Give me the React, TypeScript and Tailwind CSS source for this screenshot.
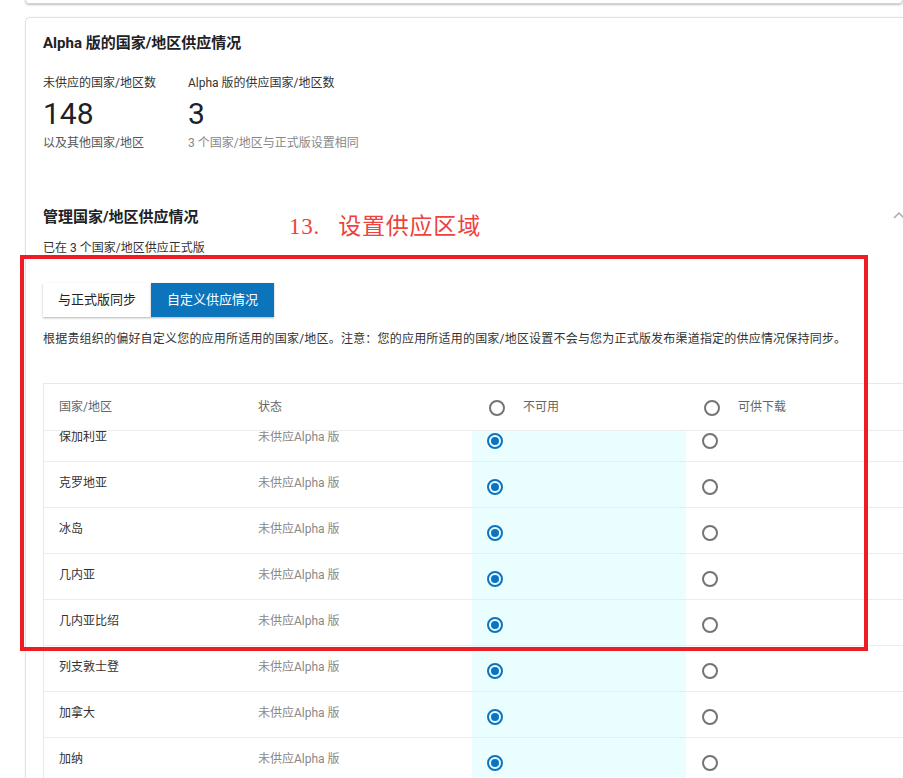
import React from "react";

const rows = [
  "保加利亚",
  "克罗地亚",
  "冰岛",
  "几内亚",
  "几内亚比绍",
  "列支敦士登",
  "加拿大",
  "加纳",
];

function Radio({ checked, className = "" }: { checked?: boolean; className?: string }) {
  return checked ? (
    <div className={`w-[16px] h-[16px] rounded-full border-2 border-[#0b73c2] flex items-center justify-center ${className}`}>
      <div className="w-[8px] h-[8px] rounded-full bg-[#0b73c2]" />
    </div>
  ) : (
    <div className={`w-[16px] h-[16px] rounded-full border-2 border-[#747474] ${className}`} />
  );
}

export default function App() {
  return (
    <div
      className="relative w-[903px] h-[778px] overflow-hidden bg-white"
      style={{ fontFamily: "Roboto, 'Noto Sans CJK SC', sans-serif" }}
    >
      {/* previous card bottom */}
      <div className="ml-[25px] -mt-[12px] h-[16px] rounded-b-[4px] border border-[#d4d4d4] shadow-[0_1px_2px_rgba(0,0,0,0.25)]" />

      {/* main card */}
      <div className="ml-[25px] mt-[13px] w-[900px] h-[800px] rounded-tl-[5px] border-l border-t border-[#e3e3e3] shadow-[0_0_2px_rgba(0,0,0,0.08)] pl-[17px] pt-[15px]">
        <div className="text-[15px] leading-[20px] font-bold text-[#202124]">Alpha 版的国家/地区供应情况</div>

        <div className="mt-[22px] flex gap-[32px]">
          <div className="flex flex-col">
            <div className="text-[12px] leading-[16px] text-[#333]">未供应的国家/地区数</div>
            <div className="mt-[5px] text-[30px] leading-[36px] text-[#202124]">148</div>
            <div className="mt-[3px] text-[12px] leading-[16px] text-[#555]">以及其他国家/地区</div>
          </div>
          <div className="flex flex-col">
            <div className="text-[12px] leading-[16px] text-[#333]">Alpha 版的供应国家/地区数</div>
            <div className="mt-[5px] text-[30px] leading-[36px] text-[#202124]">3</div>
            <div className="mt-[3px] text-[12px] leading-[16px] text-[#888]">3 个国家/地区与正式版设置相同</div>
          </div>
        </div>

        <div className="mt-[56px] w-[862px] flex items-center justify-between">
          <div className="text-[15px] leading-[20px] font-bold text-[#202124]">管理国家/地区供应情况</div>
          <svg width="12" height="8" viewBox="0 0 12 8" className="mt-[-4px]">
            <polyline points="1,7 6,2 11,7" fill="none" stroke="#aaa" strokeWidth="1.5" />
          </svg>
        </div>

        <div className="mt-[13px] text-[12px] leading-[16px] text-[#333]">已在 3 个国家/地区供应正式版</div>

        <div className="mt-[27px] flex">
          <div className="h-[34px] px-[15px] flex items-center text-[13px] text-[#222] bg-white shadow-[0_1px_2px_rgba(0,0,0,0.3)]">
            与正式版同步
          </div>
          <div className="h-[34px] px-[16px] flex items-center text-[13px] text-white bg-[#0b74bb] shadow-[0_1px_2px_rgba(0,0,0,0.3)]">
            自定义供应情况
          </div>
        </div>

        <div className="mt-[14px] text-[12px] leading-[16px] tracking-[0.2px] text-[#333] whitespace-nowrap">
          根据贵组织的偏好自定义您的应用所适用的国家/地区。注意：您的应用所适用的国家/地区设置不会与您为正式版发布渠道指定的供应情况保持同步。
        </div>

        {/* table */}
        <div className="mt-[36px] border-l border-t border-[#e8e8e8]">
          <div className="grid grid-cols-[198px_230px_214px_1fr] h-[47px] border-b border-[#ececec] text-[12px] leading-[16px] text-[#666]">
            <div className="pl-[15px] pt-[15px]">国家/地区</div>
            <div className="pl-[16px] pt-[15px]">状态</div>
            <div className="pl-[17px] pt-[16px] flex gap-[18px]">
              <Radio />
              <span className="-mt-[1px]">不可用</span>
            </div>
            <div className="pl-[18px] pt-[16px] flex gap-[18px]">
              <Radio />
              <span className="-mt-[1px]">可供下载</span>
            </div>
          </div>
          <div className="overflow-hidden">
            {rows.map((name, i) => (
              <div
                key={name}
                className={`grid grid-cols-[198px_230px_214px_1fr] h-[46px] border-b border-[#ececec] text-[12px] leading-[16px] ${i === 0 ? "-mt-[15px]" : ""}`}
              >
                <div className="pl-[15px] pt-[13px] text-[#333]">{name}</div>
                <div className="pl-[16px] pt-[13px] text-[#888]">未供应Alpha 版</div>
                <div className="pl-[15px] pt-[17px] bg-[#ebfeff]">
                  <Radio checked />
                </div>
                <div className="pl-[16px] pt-[17px]">
                  <Radio />
                </div>
              </div>
            ))}
          </div>
        </div>
      </div>

      {/* annotation */}
      <div className="absolute left-[20px] top-[255px] w-[848px] h-[396px] border-4 border-[#ee1c25]" />
      <div
        className="absolute left-[289px] top-[211px] flex text-[23px] leading-[32px] tracking-[0.8px] text-[#f0413c] whitespace-nowrap"
        style={{ fontFamily: "'Liberation Serif', 'Noto Sans CJK SC', serif" }}
      >
        <span>13.</span>
        <span className="ml-[18px]">设置供应区域</span>
      </div>
    </div>
  );
}
